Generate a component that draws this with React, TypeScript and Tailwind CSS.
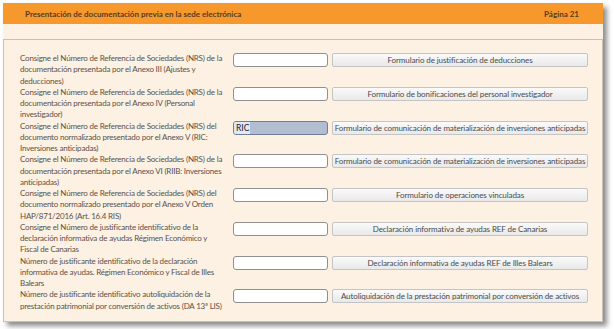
import React from "react";

const rows: { label: string[]; button: string; value?: string }[] = [
  {
    label: [
      "Consigne el Número de Referencia de Sociedades (NRS) de la",
      "documentación presentada por el Anexo III (Ajustes y",
      "deducciones)",
    ],
    button: "Formulario de justificación de deducciones",
  },
  {
    label: [
      "Consigne el Número de Referencia de Sociedades (NRS) de la",
      "documentación presentada por el Anexo IV (Personal",
      "investigador)",
    ],
    button: "Formulario de bonificaciones del personal investigador",
  },
  {
    label: [
      "Consigne el Número de Referencia de Sociedades (NRS) del",
      "documento normalizado presentado por el Anexo V (RIC:",
      "Inversiones anticipadas)",
    ],
    button: "Formulario de comunicación de materialización de inversiones anticipadas",
    value: "RIC",
  },
  {
    label: [
      "Consigne el Número de Referencia de Sociedades (NRS) de la",
      "documentación presentada por el Anexo VI (RIIB: Inversiones",
      "anticipadas)",
    ],
    button: "Formulario de comunicación de materialización de inversiones anticipadas",
  },
  {
    label: [
      "Consigne el Número de Referencia de Sociedades (NRS) del",
      "documento normalizado presentado por el Anexo V Orden",
      "HAP/871/2016 (Art. 16.4 RIS)",
    ],
    button: "Formulario de operaciones vinculadas",
  },
  {
    label: [
      "Consigne el Número de justificante identificativo de la",
      "declaración informativa de ayudas Régimen Económico y",
      "Fiscal de Canarias",
    ],
    button: "Declaración informativa de ayudas REF de Canarias",
  },
  {
    label: [
      "Número de justificante identificativo de la declaración",
      "informativa de ayudas. Régimen Económico y Fiscal de Illes",
      "Balears",
    ],
    button: "Declaración informativa de ayudas REF de Illes Balears",
  },
  {
    label: [
      "Número de justificante identificativo autoliquidación de la",
      "prestación patrimonial por conversión de activos (DA 13ª LIS)",
    ],
    button: "Autoliquidación de la prestación patrimonial por conversión de activos",
  },
];

export default function App() {
  return (
    <div
      className="w-[614px] h-[329px] bg-white pt-[3px] pl-[3px]"
      style={{ fontFamily: "Lato, 'Open Sans', sans-serif" }}
    >
      <div className="w-[600px] shadow-[4px_4px_5px_rgba(0,0,0,0.45)]">
        <div className="h-[21px] bg-[#f7982c] flex items-center justify-between pl-[22px] pr-[24px] text-[8px] font-bold text-[#553c22]">
          <span>Presentación de documentación previa en la sede electrónica</span>
          <span>Página 21</span>
        </div>
        <div className="h-[15px] bg-[#fdf1e3]" />
        <div className="h-[283px] bg-[#fdf1e3] border border-[#c9c1b8] pt-[13px] pl-[16px]">
          {rows.map((r, i) => (
            <div key={i} className="flex items-start">
              <div className="w-[213px] text-[8px] tracking-[-0.2px] leading-[11.25px] text-[#5b5148]">
                {r.label.map((l, j) => (
                  <div key={j} className="whitespace-nowrap">
                    {l}
                  </div>
                ))}
              </div>
              <div
                className={
                  r.value
                    ? "w-[95px] h-[14px] rounded-[3px] border border-[#6f7f99] bg-[#b2bdd1] flex items-center text-[8.5px] text-[#222] overflow-hidden"
                    : "w-[95px] h-[14px] rounded-[3px] border border-[#8f8f8f] bg-white"
                }
              >
                {r.value && (
                  <span className="bg-[#e3e9f2] pl-[2px] pr-[1px] leading-[12px]">{r.value}</span>
                )}
              </div>
              <div className="ml-[4px] w-[256px] h-[14px] rounded-[2px] border border-[#c4c4c4] bg-gradient-to-b from-[#fafafa] to-[#e9e9e9] flex items-center justify-center text-[8px] tracking-[-0.1px] text-[#4a4a4a] whitespace-nowrap overflow-hidden">
                {r.button}
              </div>
            </div>
          ))}
        </div>
      </div>
    </div>
  );
}
